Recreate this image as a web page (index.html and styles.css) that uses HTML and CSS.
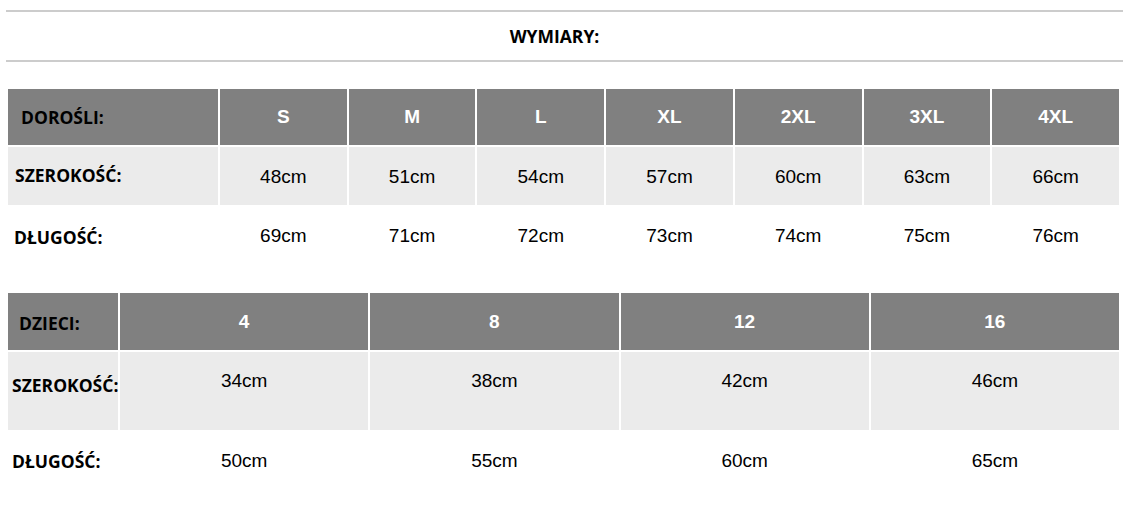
FILE: index.html
```html
<!DOCTYPE html>
<html lang="pl">
<head>
<meta charset="utf-8">
<title>Wymiary</title>
<link rel="stylesheet" href="styles.css">
</head>
<body>
<div class="page">
  <div class="title-bar"><h1 class="title">WYMIARY:</h1></div>

  <div class="chart adult">
    <div class="cell head label">DOROŚLI:</div>
    <div class="cell head">S</div>
    <div class="cell head">M</div>
    <div class="cell head">L</div>
    <div class="cell head">XL</div>
    <div class="cell head">2XL</div>
    <div class="cell head">3XL</div>
    <div class="cell head">4XL</div>

    <div class="cell shade label">SZEROKOŚĆ:</div>
    <div class="cell shade">48cm</div>
    <div class="cell shade">51cm</div>
    <div class="cell shade">54cm</div>
    <div class="cell shade">57cm</div>
    <div class="cell shade">60cm</div>
    <div class="cell shade">63cm</div>
    <div class="cell shade">66cm</div>

    <div class="cell plain label">DŁUGOŚĆ:</div>
    <div class="cell plain">69cm</div>
    <div class="cell plain">71cm</div>
    <div class="cell plain">72cm</div>
    <div class="cell plain">73cm</div>
    <div class="cell plain">74cm</div>
    <div class="cell plain">75cm</div>
    <div class="cell plain">76cm</div>
  </div>

  <div class="chart kids">
    <div class="cell head label">DZIECI:</div>
    <div class="cell head">4</div>
    <div class="cell head">8</div>
    <div class="cell head">12</div>
    <div class="cell head">16</div>

    <div class="cell shade tall label">SZEROKOŚĆ:</div>
    <div class="cell shade tall">34cm</div>
    <div class="cell shade tall">38cm</div>
    <div class="cell shade tall">42cm</div>
    <div class="cell shade tall">46cm</div>

    <div class="cell plain label">DŁUGOŚĆ:</div>
    <div class="cell plain">50cm</div>
    <div class="cell plain">55cm</div>
    <div class="cell plain">60cm</div>
    <div class="cell plain">65cm</div>
  </div>
</div>
</body>
</html>
```

FILE: styles.css
```css
html, body {
  margin: 0;
  padding: 0;
  background: #ffffff;
}

.page {
  padding-top: 10px;
  font-family: "Liberation Sans", Arial, sans-serif;
  color: #000;
}

.title-bar {
  margin: 0 14px 0 6px;
  height: 48px;
  border-top: 2px solid #cccccc;
  border-bottom: 2px solid #cccccc;
  display: flex;
  align-items: center;
  justify-content: center;
  padding-right: 20px;
}

.title {
  margin: 0;
  font-family: "Open Sans", "Noto Sans", sans-serif;
  font-weight: 700;
  font-size: 17.5px;
  line-height: 22px;
}

.chart {
  display: grid;
  column-gap: 2px;
  row-gap: 2px;
  margin-left: 8px;
  width: 1111px;
}

.adult {
  margin-top: 27px;
  grid-template-columns: 210px repeat(7, 1fr);
  grid-template-rows: 56px 58px 58px;
}

.kids {
  margin-top: 28px;
  grid-template-columns: 110px repeat(4, 1fr);
  grid-template-rows: 57px 78px 58px;
}

.cell {
  display: flex;
  align-items: center;
  justify-content: center;
  font-size: 19px;
  line-height: 22px;
  white-space: nowrap;
}

.head {
  background: #808080;
  color: #ffffff;
  font-weight: 700;
}

.shade {
  background: #ebebeb;
}

.adult .shade {
  padding-top: 2px;
}

.plain {
  background: #ffffff;
}

.tall {
  align-items: flex-start;
  padding-top: 18px;
}

.label {
  justify-content: flex-start;
  color: #000;
  font-family: "Open Sans", "Noto Sans", sans-serif;
  font-weight: 700;
  font-size: 17.5px;
  z-index: 1;
}

.adult .head.label { padding-left: 13px; }
.adult .shade.label { padding-left: 7px; padding-top: 0; padding-bottom: 3px; }
.adult .plain.label { padding-left: 6px; padding-top: 2px; }

.kids .head.label { padding-left: 11px; padding-top: 2px; }
.kids .shade.label { padding-left: 4px; padding-top: 22px; }
.kids .plain.label { padding-left: 4px; }
```
